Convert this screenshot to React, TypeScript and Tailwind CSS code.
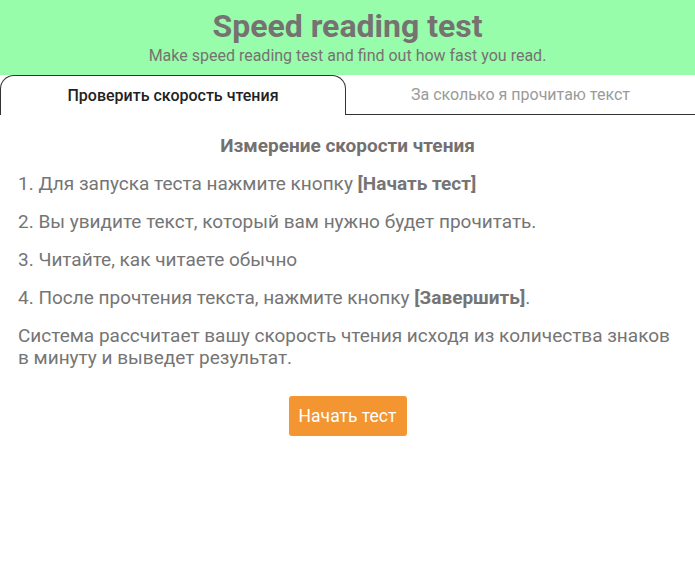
export default function App() {
  return (
    <div className="min-h-screen bg-white font-['Roboto',sans-serif] text-[#757575]">
      <header className="flex h-[75px] flex-col items-center bg-[#98fdaa] pt-[7px]">
        <h1 className="text-[32px] font-bold leading-[39px] text-[#767272]">Speed reading test</h1>
        <p className="text-[16px] leading-[20px] text-[#767272]">Make speed reading test and find out how fast you read.</p>
      </header>

      <div className="flex h-[40px]">
        <div className="flex w-[346px] items-center justify-center rounded-t-[14px] border border-b-0 border-[#333] text-[16px] font-medium text-[#222]">
          Проверить скорость чтения
        </div>
        <div className="flex flex-1 items-center justify-center border-b border-[#333] text-[16px] text-[#9a9a9a]">
          За сколько я прочитаю текст
        </div>
      </div>

      <main className="px-[18px] pt-[20px] text-[19px] leading-[22px]">
        <h2 className="mb-[16px] text-center text-[19px] font-bold text-[#757070]">Измерение скорости чтения</h2>
        <p className="mb-[16px]">1. Для запуска теста нажмите кнопку <b className="font-bold">[Начать тест]</b></p>
        <p className="mb-[16px]">2. Вы увидите текст, который вам нужно будет прочитать.</p>
        <p className="mb-[16px]">3. Читайте, как читаете обычно</p>
        <p className="mb-[16px]">4. После прочтения текста, нажмите кнопку <b className="font-bold">[Завершить]</b>.</p>
        <p>Система рассчитает вашу скорость чтения исходя из количества знаков в минуту и выведет результат.</p>
        <div className="mt-[27px] flex justify-center">
          <button className="h-[40px] w-[118px] rounded-[3px] bg-[#f39531] text-[17.5px] text-white">Начать тест</button>
        </div>
      </main>
    </div>
  );
}
